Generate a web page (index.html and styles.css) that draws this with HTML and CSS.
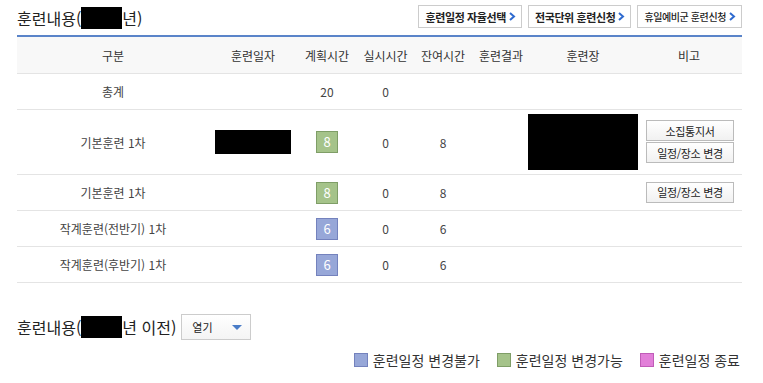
FILE: index.html
```html
<!DOCTYPE html>
<html lang="ko">
<head>
    <meta charset="UTF-8">
    <title>훈련내용</title>
    <link rel="stylesheet" href="styles.css">
</head>
<body>
    <div class="wrap">
        <!-- 상단 제목 + 버튼 -->
        <div class="title-bar">
            <h2 class="title">훈련내용(<span class="mask mask-title"></span>년)</h2>
            <div class="top-buttons">
                <a class="link-btn">훈련일정 자율선택 <svg width="7" height="9" viewBox="0 0 7 9"><path d="M1 1l4 3.5L1 8" fill="none" stroke="#2f6bd0" stroke-width="2"/></svg></a>
                <a class="link-btn">전국단위 훈련신청 <svg width="7" height="9" viewBox="0 0 7 9"><path d="M1 1l4 3.5L1 8" fill="none" stroke="#2f6bd0" stroke-width="2"/></svg></a>
                <a class="link-btn thin">휴일예비군 훈련신청 <svg width="7" height="9" viewBox="0 0 7 9"><path d="M1 1l4 3.5L1 8" fill="none" stroke="#2f6bd0" stroke-width="2"/></svg></a>
            </div>
        </div>

        <!-- 훈련 목록 -->
        <table class="plan">
            <colgroup>
                <col style="width:192px"><col style="width:88px"><col style="width:60px"><col style="width:57px">
                <col style="width:58px"><col style="width:58px"><col style="width:106px"><col style="width:106px">
            </colgroup>
            <thead>
                <tr><th>구분</th><th>훈련일자</th><th>계획시간</th><th>실시시간</th><th>잔여시간</th><th>훈련결과</th><th>훈련장</th><th>비고</th></tr>
            </thead>
            <tbody>
                <tr><td>총계</td><td></td><td>20</td><td>0</td><td></td><td></td><td></td><td></td></tr>
                <tr class="tall">
                    <td>기본훈련 1차</td>
                    <td><span class="mask mask-date"></span></td>
                    <td><span class="badge green">8</span></td>
                    <td>0</td><td>8</td><td></td>
                    <td><span class="mask mask-place"></span></td>
                    <td><button class="small-btn">소집통지서</button><button class="small-btn">일정/장소 변경</button></td>
                </tr>
                <tr>
                    <td>기본훈련 1차</td><td></td>
                    <td><span class="badge green">8</span></td>
                    <td>0</td><td>8</td><td></td><td></td>
                    <td><button class="small-btn">일정/장소 변경</button></td>
                </tr>
                <tr>
                    <td>작계훈련(전반기) 1차</td><td></td>
                    <td><span class="badge blue">6</span></td>
                    <td>0</td><td>6</td><td></td><td></td><td></td>
                </tr>
                <tr>
                    <td>작계훈련(후반기) 1차</td><td></td>
                    <td><span class="badge blue">6</span></td>
                    <td>0</td><td>6</td><td></td><td></td><td></td>
                </tr>
            </tbody>
        </table>

        <!-- 이전 훈련내용 -->
        <div class="past">
            <h2 class="title">훈련내용(<span class="mask mask-title"></span>년 이전)</h2>
            <div class="select">열기 <span class="caret"></span></div>
        </div>

        <!-- 범례 -->
        <div class="legend">
            <span class="legend-item"><i class="sq blue"></i>훈련일정 변경불가</span>
            <span class="legend-item"><i class="sq green"></i>훈련일정 변경가능</span>
            <span class="legend-item"><i class="sq pink"></i>훈련일정 종료</span>
        </div>
    </div>
</body>
</html>
```

FILE: styles.css
```css
body {
    margin: 0;
    font-family: "Noto Sans CJK KR", "Noto Sans", sans-serif;
    color: #333;
    background: #fff;
}

.wrap {
    width: 725px;
    padding: 0 21px 0 17px;
}

.title-bar {
    display: flex;
    justify-content: space-between;
    align-items: center;
    height: 35px;
    border-bottom: 2px solid #5a84c9;
}

.title {
    margin: 0;
    font-size: 16px;
    font-weight: normal;
    color: #222;
    display: flex;
    align-items: center;
    line-height: 22px;
}

.mask {
    display: inline-block;
    background: #000;
}

.mask-title {
    width: 41px;
    height: 22px;
}

.mask-date {
    width: 76px;
    height: 24px;
    vertical-align: middle;
}

.mask-place {
    width: 110px;
    height: 56px;
    vertical-align: middle;
    margin-left: -2px;
}

.top-buttons {
    display: flex;
    gap: 6px;
    margin-top: -2px;
}

.link-btn {
    display: flex;
    align-items: center;
    gap: 3px;
    height: 21px;
    padding: 0 5px 0 6px;
    border: 1px solid #ccc;
    font-size: 11px;
    font-weight: 600;
    letter-spacing: -0.4px;
    color: #222;
    background: #fff;
}

.link-btn.thin {
    font-size: 10px;
    font-weight: 500;
}

.plan {
    width: 725px;
    border-collapse: collapse;
    table-layout: fixed;
    font-size: 12px;
}

.plan th {
    height: 36px;
    background: #f8f8f8;
    font-weight: normal;
    color: #333;
    border-bottom: 1px solid #e4e4e4;
    padding: 0;
}

.plan td {
    height: 35px;
    text-align: center;
    padding: 0;
    border-bottom: 1px solid #e4e4e4;
    color: #444;
}

.plan tr.tall td {
    height: 64px;
}

.badge {
    display: inline-block;
    width: 20px;
    height: 20px;
    line-height: 20px;
    color: #fff;
    font-size: 13px;
    vertical-align: middle;
}

.badge.green {
    background: #a5c38a;
    border: 1px solid #7f9e67;
}

.badge.blue {
    background: #97a7d8;
    border: 1px solid #7482bd;
}

.small-btn {
    display: block;
    margin: 0 auto 1px 10px;
    width: 88px;
    height: 21px;
    padding: 0;
    font-family: inherit;
    font-size: 11px;
    color: #222;
    border: 1px solid #bbb;
    background: linear-gradient(#fff, #f1f1f1);
    letter-spacing: -0.3px;
}

.past {
    display: flex;
    align-items: center;
    gap: 5px;
    margin-top: 31px;
    height: 26px;
}

.select {
    display: flex;
    align-items: center;
    justify-content: space-between;
    width: 50px;
    height: 24px;
    padding: 0 8px 0 10px;
    border: 1px solid #ccc;
    background: linear-gradient(#fff, #f4f4f4);
    font-size: 11px;
    color: #222;
}

.caret {
    width: 0;
    height: 0;
    border-left: 5px solid transparent;
    border-right: 5px solid transparent;
    border-top: 5px solid #4a7cc7;
}

.legend {
    display: flex;
    justify-content: flex-end;
    gap: 17px;
    margin-top: 10px;
    padding-right: 2px;
    font-size: 14px;
    color: #333;
}

.legend-item {
    display: flex;
    align-items: center;
    gap: 5px;
}

.sq {
    display: inline-block;
    width: 14px;
    height: 14px;
    box-sizing: border-box;
}

.sq.blue {
    background: #97a7d8;
    border: 1px solid #7482bd;
}

.sq.green {
    background: #a5c38a;
    border: 1px solid #7f9e67;
}

.sq.pink {
    background: #e27fd9;
    border: 1px solid #c05cb8;
}
```
